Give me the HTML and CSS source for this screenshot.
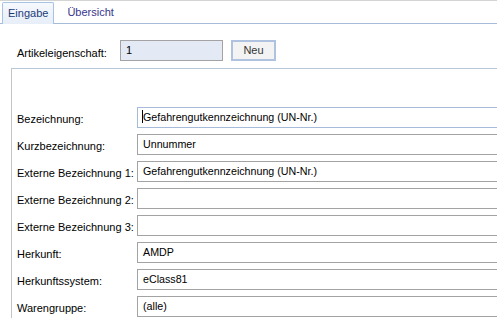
FILE: index.html
```html
<!DOCTYPE html>
<html lang="de">
<head>
<meta charset="utf-8">
<link rel="stylesheet" href="styles.css">
</head>
<body>
<div class="window">
  <div class="tabbar">
    <div class="tab active">Eingabe</div>
    <div class="tab">Übersicht</div>
  </div>
  <div class="header">
    <span class="hlabel">Artikeleigenschaft:</span>
    <div class="field readonly">1</div>
    <div class="button">Neu</div>
  </div>
  <div class="panel">
    <div class="form">
      <span class="label">Bezeichnung:</span>
      <div class="field wide focused"><span class="caret"></span>Gefahrengutkennzeichnung (UN-Nr.)</div>
      <span class="label">Kurzbezeichnung:</span>
      <div class="field wide">Unnummer</div>
      <span class="label">Externe Bezeichnung 1:</span>
      <div class="field wide">Gefahrengutkennzeichnung (UN-Nr.)</div>
      <span class="label">Externe Bezeichnung 2:</span>
      <div class="field wide"></div>
      <span class="label">Externe Bezeichnung 3:</span>
      <div class="field wide"></div>
      <span class="label">Herkunft:</span>
      <div class="field wide">AMDP</div>
      <span class="label">Herkunftssystem:</span>
      <div class="field wide">eClass81</div>
      <span class="label">Warengruppe:</span>
      <div class="field wide">(alle)</div>
    </div>
  </div>
</div>
</body>
</html>
```
FILE: styles.css
```css
html, body {
  margin: 0;
  padding: 0;
  background: #ffffff;
}
body {
  font-family: "Liberation Sans", Arial, sans-serif;
  font-size: 11px;
  color: #000000;
  width: 497px;
  height: 318px;
  overflow: hidden;
}
.window {
  border-top: 1px solid #d4d4d4;
  height: 317px;
  overflow: hidden;
}
.tabbar {
  display: flex;
  align-items: flex-end;
  height: 22px;
  padding-left: 2px;
  border-bottom: 1px solid #a6bbd6;
}
.tab {
  height: 21px;
  line-height: 20px;
  padding: 0 6px;
  margin-left: 7px;
  color: #37368c;
}
.tab.active {
  margin-left: 0;
  margin-bottom: -1px;
  padding: 0 5px;
  height: 21px;
  line-height: 20px;
  color: #1c3b78;
  border: 1px solid #a8c2e4;
  border-bottom: none;
  border-radius: 2px 2px 0 0;
  background: linear-gradient(#f6f9fd, #e7eef8);
}
.header {
  display: flex;
  align-items: center;
  padding: 16px 0 0 17px;
  height: 21px;
  margin-bottom: 7px;
}
.hlabel {
  width: 103px;
  padding-top: 4px;
}
.field {
  box-sizing: border-box;
  height: 21px;
  border: 1px solid #a3a3a3;
  padding: 0 5px;
  line-height: 18px;
  font-size: 10.7px;
  white-space: nowrap;
  overflow: hidden;
}
.readonly {
  width: 103px;
  background: #e3eaf6;
  padding-left: 5px;
  font-size: 11px;
}
.button {
  box-sizing: border-box;
  width: 45px;
  height: 21px;
  margin-left: 8px;
  border: 2px solid #afc3e1;
  background: #f3f3f3;
  color: #333333;
  text-align: center;
  line-height: 17px;
}
.panel {
  margin-left: 11px;
  border-top: 1px solid #b7c8da;
  border-left: 1px solid #c4c4c4;
  padding: 38px 0 0 5px;
  height: 300px;
  overflow: hidden;
}
.form {
  display: grid;
  grid-template-columns: 120px 1fr;
  row-gap: 6px;
  align-items: center;
}
.label {
  padding-top: 3px;
  white-space: nowrap;
}
.wide {
  border-right: none;
  padding-left: 5px;
}
.focused {
  border-color: #a6bada;
}
.caret {
  display: inline-block;
  width: 1px;
  height: 13px;
  background: #000000;
  vertical-align: -2px;
  margin-left: -1px;
  margin-right: 0;
}
```
